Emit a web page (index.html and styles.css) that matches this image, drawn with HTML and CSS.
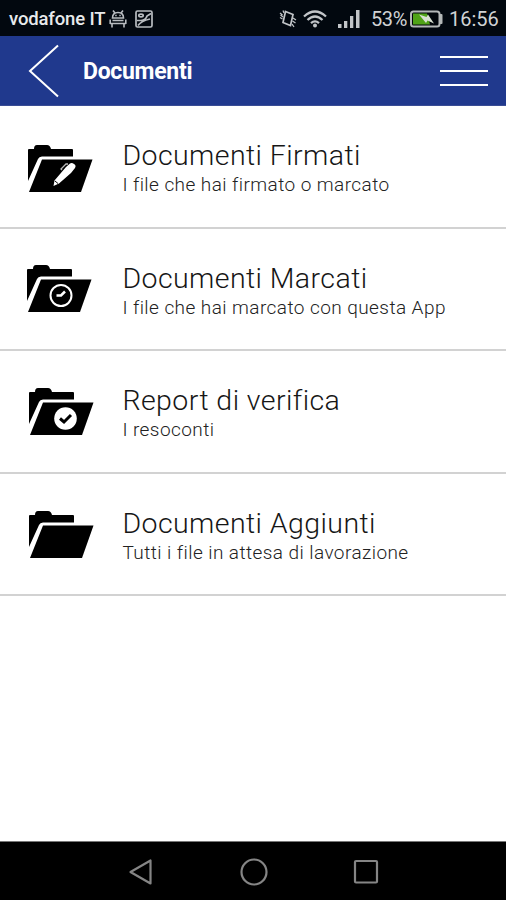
FILE: index.html
```html
<!DOCTYPE html>
<html lang="it">
<head>
<meta charset="utf-8">
<title>Documenti</title>
<link rel="stylesheet" href="styles.css">
</head>
<body>
<svg width="0" height="0" class="defs">
  <symbol id="folder" viewBox="0 0 70 50">
    <path d="M2 6Q2 5 3 5H8Q8 1 11 1H21Q24 1 25 5H46Q47 5 47 6V12.500H16Q13 12.500 12 15L2 37Z"/>
    <path d="M16 15.500H66.500L55 48H3Z"/>
  </symbol>
</svg>
<div class="status">
  <span class="carrier">vodafone IT</span>
  <svg class="android" width="18" height="18" viewBox="0 0 18 18" fill="none" stroke="#b8bcc0" stroke-width="1.600">
    <path d="M4 .5L6 3M14 .5L12 3M3.500 8Q3.500 2.500 9 2.500T14.500 8ZM1.200 9.500V14M16.800 9.500V14M3.500 10.500H14.500M1 13.500H17M3 14V17.500M15 14V17.500M6.200 5.500h1.500M10.300 5.500h1.500"/>
  </svg>
  <svg class="picture" width="18" height="18" viewBox="0 0 18 18" fill="none" stroke="#b8bcc0" stroke-width="1.700">
    <rect x="1" y="1" width="16" height="16" rx="1.500"/><ellipse cx="6" cy="5.500" rx="2.200" ry="1.400"/><path d="M2 10.500H6Q11 10 12 6L16 3.500M3 15.500Q6 11 15 9"/>
  </svg>
  <span class="spacer"></span>
  <svg class="vibrate" width="18" height="20" viewBox="0 0 18 20" fill="none" stroke="#c2c5c8" stroke-width="1.700">
    <path d="M6.500 2.500L14 5.500L11.500 16.500L4 13.500Z"/><path stroke-width="1.300" d="M1 4L3.500 6M4 1.500L5 4M1 8.500L3.500 10M1.500 6L4 8M14 9L17 11M13.500 12L16.500 14M13 15L15 18"/>
  </svg>
  <svg class="wifi" width="24" height="18" viewBox="0 0 24 18" fill="none" stroke="#c2c5c8" stroke-width="2.300">
    <path d="M1 6.500Q12-3.500 23 6.500M4.500 10Q12 3 19.500 10M8 13.200Q12 9.500 16 13.200"/><circle cx="12" cy="15.500" r="2" fill="#c2c5c8" stroke="none"/>
  </svg>
  <svg class="signal" width="22" height="18" viewBox="0 0 22 18" fill="#c2c5c8">
    <rect x="0" y="14" width="3.500" height="4"/><rect x="6" y="11" width="3.300" height="7"/><rect x="12" y="6" width="3.300" height="12"/><rect x="18" y="0" width="3.500" height="18"/>
  </svg>
  <span class="percent">53%</span>
  <svg class="battery" width="33" height="18" viewBox="0 0 33 18">
    <rect x="1" y="1.500" width="28.500" height="15" rx="2.500" fill="#02070c" stroke="#b4b8b8" stroke-width="2"/><path d="M30 4h1.500q1 0 1 1v8q0 1-1 1H30z" fill="#b4b8b8"/><path d="M3 3.500H17L20 14.500H3Z" fill="#4fa317"/><path d="M9 4.500L16.500 7L18 4.500L24 13.500L17.500 10.500L16 13Z" fill="#d8e1d3"/>
  </svg>
  <span class="clock">16:56</span>
</div>
<header class="bar">
  <svg class="back" width="32" height="54" viewBox="0 0 32 54" fill="none" stroke="#fff" stroke-width="2"><path d="M30 1.500L2 27L30 52.500"/></svg>
  <h1>Documenti</h1>
  <span class="menu"><i></i><i></i><i></i></span>
</header>
<main>
  <section class="row first">
    <svg class="icon" viewBox="0 0 70 50"><use href="#folder"/><path d="M27.500 42L28.500 36.500L40 23L44 19.500Q46 18.500 48 20Q50.500 21.500 49 24L45 29L33 39.500Z" fill="#fff"/><path d="M36 26L35 25L40 20H42" fill="none" stroke="#bbb" stroke-width="1.300"/><path d="M29 37L32 39.500" stroke="#000"/></svg>
    <div class="text"><h2>Documenti Firmati</h2><p>I file che hai firmato o marcato</p></div>
  </section>
  <section class="row second">
    <svg class="icon" viewBox="0 0 70 50"><use href="#folder"/><g fill="none" stroke="#fff"><circle cx="36" cy="31.500" r="10.500" stroke-width="2"/><path d="M31.500 31.500H36L40 27.500" stroke-width="2.500"/></g></svg>
    <div class="text"><h2>Documenti Marcati</h2><p>I file che hai marcato con questa App</p></div>
  </section>
  <section class="row third">
    <svg class="icon" viewBox="0 0 70 50"><use href="#folder"/><circle cx="38.500" cy="31.500" r="11.300" fill="#fff"/><path d="M33 31.500L37 35L44 28" fill="none" stroke="#000" stroke-width="3"/></svg>
    <div class="text"><h2>Report di verifica</h2><p>I resoconti</p></div>
  </section>
  <section class="row fourth">
    <svg class="icon" viewBox="0 0 70 50"><use href="#folder"/></svg>
    <div class="text"><h2>Documenti Aggiunti</h2><p>Tutti i file in attesa di lavorazione</p></div>
  </section>
</main>
<nav class="nav">
  <svg width="26" height="30" viewBox="0 0 26 30"><path d="M2.500 15L22.500 3.500V26.500Z"/></svg>
  <svg width="30" height="30" viewBox="0 0 30 30"><circle cx="15" cy="15" r="12.500"/></svg>
  <svg width="26" height="30" viewBox="0 0 26 30"><rect x="2" y="4" width="22" height="21.500" rx="1"/></svg>
</nav>
</body>
</html>
```

FILE: styles.css
```css
* { box-sizing: border-box; margin: 0; padding: 0; }
body { width: 506px; height: 900px; display: flex; flex-direction: column; background: #fff; font-family: Roboto, sans-serif; overflow: hidden; }
svg { display: block; flex: none; }
.defs { position: absolute; }
.status { height: 36px; flex: none; background: #02080f; display: flex; align-items: center; padding: 1px 8px 0 9px; color: #d0d2d4; font-size: 20px; white-space: nowrap; }
.carrier { width: 97px; font-size: 18.500px; font-weight: 500; color: #e8eaec; letter-spacing: -0.150px; }
.android { margin-left: 3px; }
.picture { margin-left: 8px; }
.spacer { flex: 1; }
.wifi { margin-left: 6px; }
.signal { margin-left: 11px; }
.percent { margin-left: 11px; width: 37px; letter-spacing: -0.400px; }
.battery { margin-left: 2px; }
.clock { margin-left: 6px; width: 49px; }
.bar { height: 70px; flex: none; background: #20398d; display: flex; align-items: center; padding: 1px 18px 0 28px; border-bottom: 1px solid #3a4d95; color: #fff; }
.bar h1 { margin: 1px 0 0 23px; font-size: 23px; line-height: 28px; font-weight: 700; letter-spacing: -0.300px; flex: 1; }
.menu { width: 48px; display: flex; flex-direction: column; gap: 12px; }
.menu i { height: 2px; background: #fff; }
main { flex: 1; }
.row { height: 122.500px; display: flex; align-items: flex-start; padding: 0 0 0 26px; border-bottom: 2px solid #d2d2d2; }
.icon { width: 70px; height: 50px; margin-top: 38px; }
.second .icon { margin-left: -1px; margin-right: 1px; margin-top: 35px; }
.third .icon { margin-top: 36px; }
.fourth .icon { margin-top: 36px; }
.third .icon, .fourth .icon { margin-left: 0.500px; margin-right: -0.500px; }
.text { margin: 34px 0 0 26.400px; white-space: nowrap; }
h2 { font-size: 28.500px; line-height: 32px; font-weight: 300; color: #161616; letter-spacing: 0.420px; }
p { margin-top: 1px; font-size: 19px; line-height: 24px; font-weight: 300; color: #222; letter-spacing: 0.430px; }
.nav { height: 59px; flex: none; background: #000; border-top: 1px solid #777; display: flex; justify-content: space-between; align-items: center; padding: 1px 127px 0 128px; }
.nav svg { fill: none; stroke: #858585; stroke-width: 2.200; stroke-linejoin: round; }
```
